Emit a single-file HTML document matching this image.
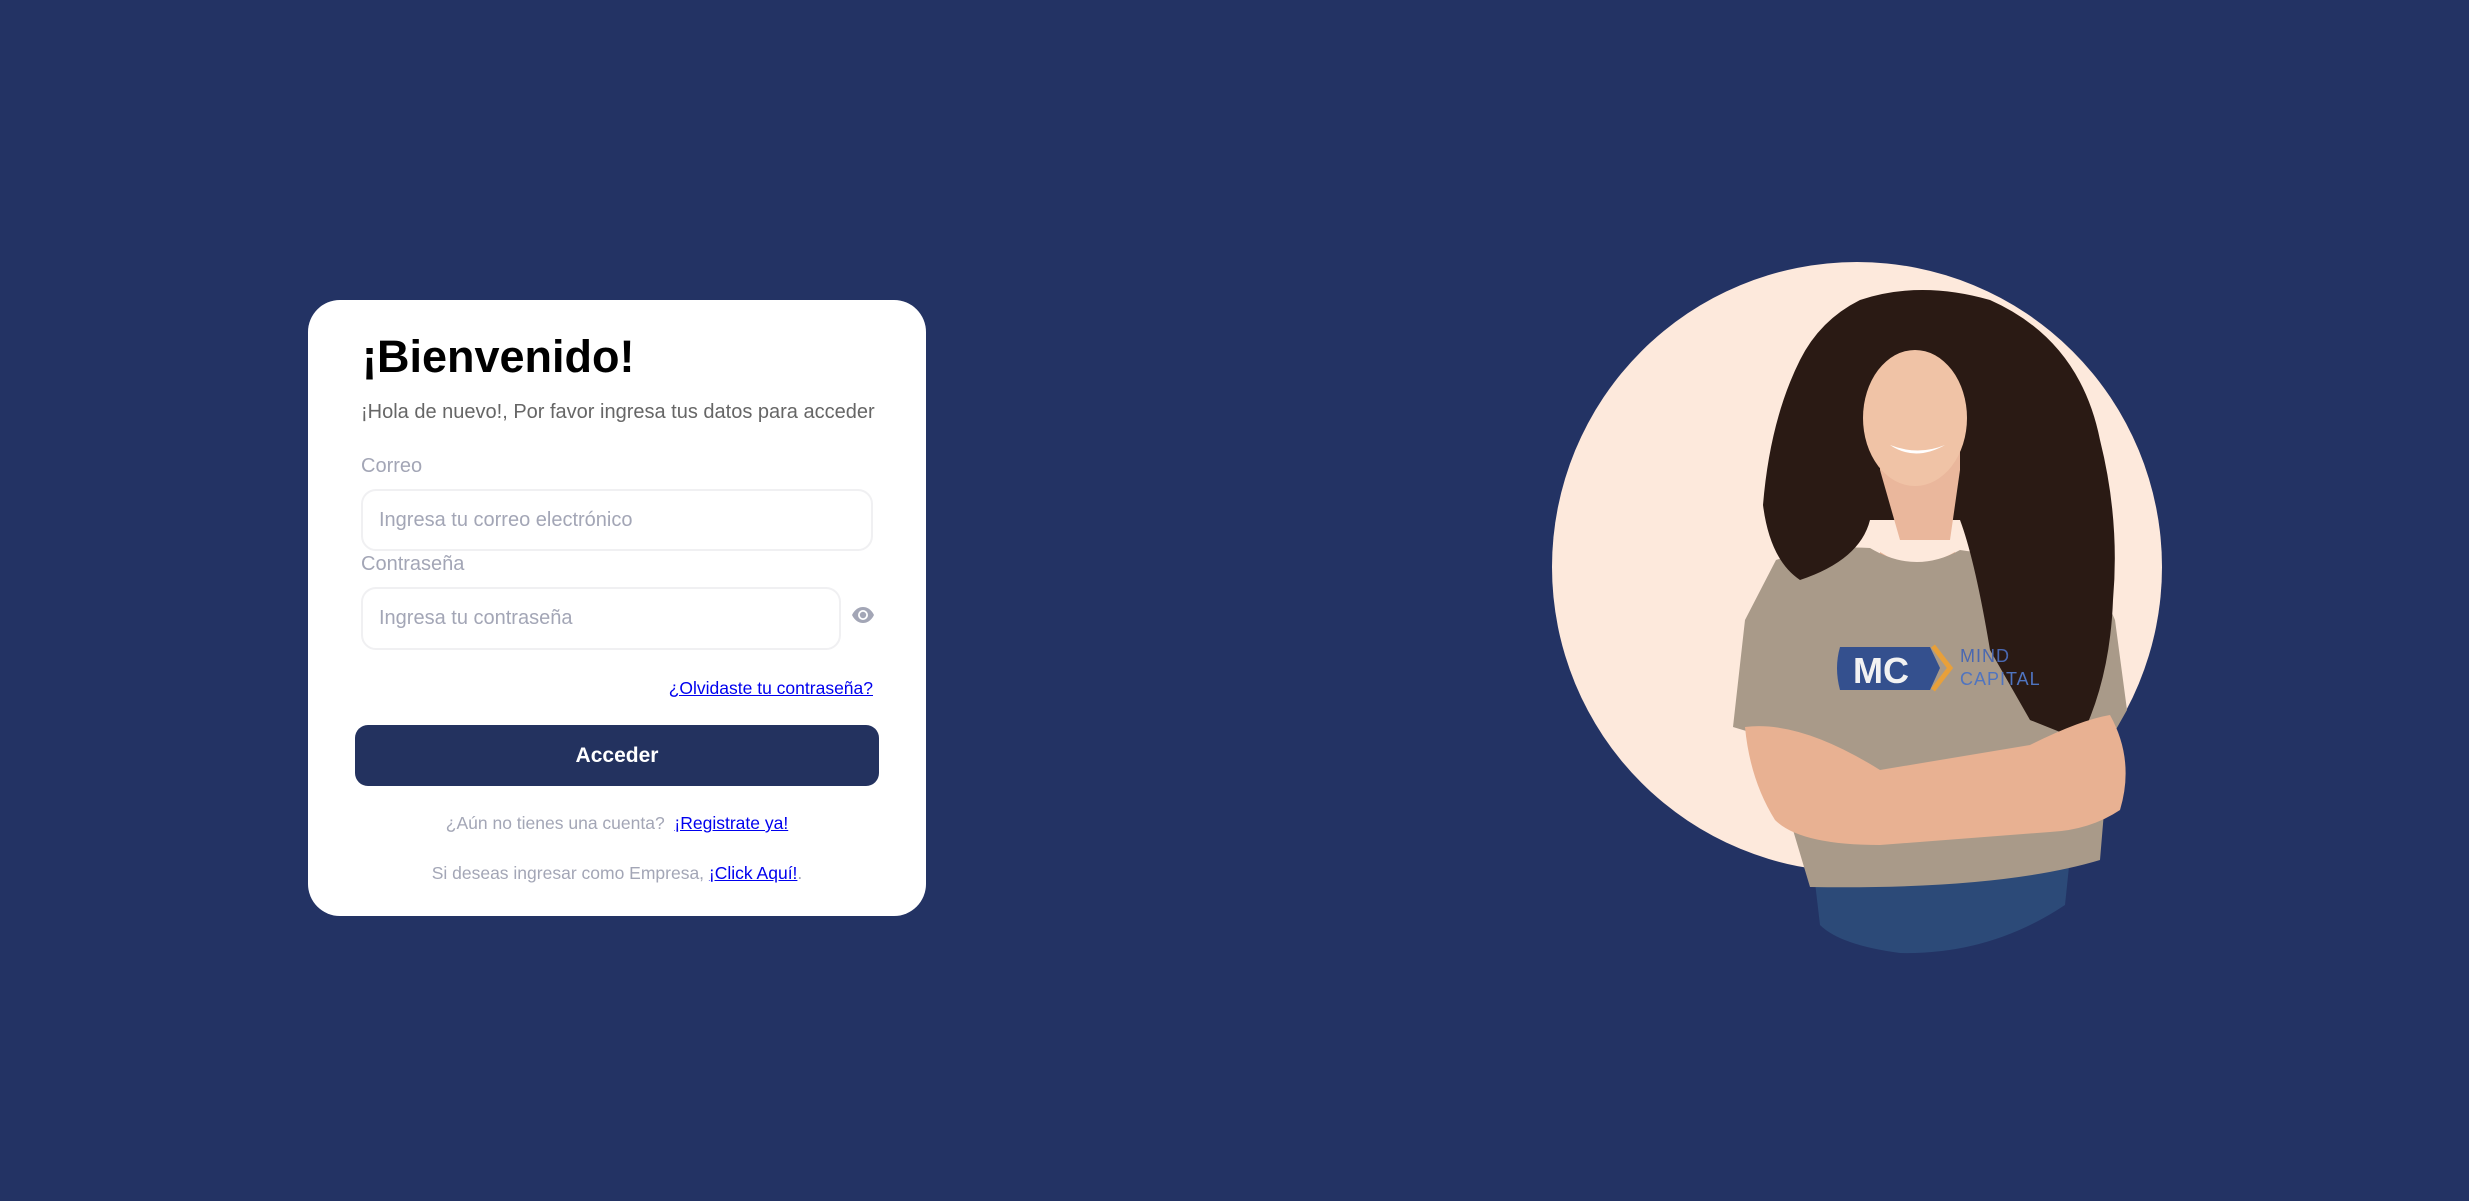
<!DOCTYPE html>
<html><head><meta charset="utf-8"><style>
*{box-sizing:border-box;margin:0;padding:0}
html,body{width:2469px;height:1201px;overflow:hidden;background:#233364;font-family:"Liberation Sans",Arial,sans-serif}
.card{position:absolute;left:308px;top:300px;width:618px;height:616px;background:#fff;border-radius:32px}
.abs{position:absolute;white-space:nowrap}
h1{position:absolute;left:54px;top:31px;font-size:45px;font-weight:bold;color:#000}
.sub{left:53px;top:101px;font-size:20px;color:#666}
.lbl{font-size:20px;color:#a3a6b6}
.inp{position:absolute;border:2px solid #f0f0f2;border-radius:15px;background:#fff;font-size:20px;color:#a3a6b6;padding-left:16px;display:flex;align-items:center}
a{color:#0000ee;text-decoration:underline}
.btn{position:absolute;left:47px;top:425px;width:524px;height:61px;background:#23325f;border-radius:13px;color:#fff;font-weight:bold;font-size:21px;display:flex;align-items:center;justify-content:center}
.small{font-size:17.5px;color:#a3a6b6;width:618px;text-align:center;left:0}
</style></head><body>
<div class="card">
<h1>¡Bienvenido!</h1>
<div class="abs sub">¡Hola de nuevo!, Por favor ingresa tus datos para acceder</div>
<div class="abs lbl" style="left:53px;top:155px">Correo</div>
<div class="inp" style="left:53px;top:189px;width:512px;height:62px">Ingresa tu correo electrónico</div>
<div class="abs lbl" style="left:53px;top:253px">Contraseña</div>
<div class="inp" style="left:53px;top:287px;width:480px;height:63px">Ingresa tu contraseña</div>
<svg class="abs" style="left:543px;top:305px" width="24" height="20" viewBox="0 0 24 20"><path d="M1 10C4 4 8 2 12 2s8 2 11 8c-3 6-7 8-11 8S4 16 1 10z" fill="#a3a6b6"/><circle cx="12" cy="10" r="5" fill="#fff"/><circle cx="12" cy="10" r="3.2" fill="#a3a6b6"/></svg>
<div class="abs" style="right:53px;top:378px;font-size:17.5px"><a>¿Olvidaste tu contraseña?</a></div>
<div class="btn">Acceder</div>
<div class="abs small" style="top:513px">¿Aún no tienes una cuenta? &nbsp;<a>¡Registrate ya!</a></div>
<div class="abs small" style="top:563px">Si deseas ingresar como Empresa, <a>¡Click Aquí!</a>.</div>
</div>
<svg class="abs" style="left:0;top:0" width="2469" height="1201">
<circle cx="1857" cy="567" r="305" fill="#fde9dc"/>
<path d="M1812 857 L2070 857 L2065 905 Q1990 955 1900 953 Q1840 945 1820 925 Z" fill="#2c4a78"/>
<path d="M1880 552 Q1915 575 1955 552 L1955 600 L1880 600Z" fill="#e8b192"/>
<path d="M1776 560 Q1820 545 1870 548 Q1915 575 1960 550 L2030 560 Q2100 580 2115 620 L2127 710 L2110 740 L2100 860 Q2000 890 1810 887 L1790 820 L1776 740 L1733 727 L1745 620 Z" fill="#a99a89"/>
<path d="M1860 300 Q1920 280 1990 300 Q2080 340 2100 440 Q2120 520 2113 600 Q2110 680 2080 740 L2030 720 L1990 650 Q1975 560 1960 520 L1870 520 Q1860 560 1800 580 Q1770 560 1763 505 Q1770 420 1800 360 Q1820 320 1860 300Z" fill="#2a1a14"/>
<path d="M1880 395 L1880 470 L1900 540 L1950 540 L1960 470 L1960 395Z" fill="#eab79c"/>
<ellipse cx="1915" cy="418" rx="52" ry="68" fill="#f0c3a6"/>
<path d="M1890 445 Q1915 462 1945 445 Q1918 456 1890 445Z" fill="#fff"/>
<path d="M1745 727 Q1800 720 1880 770 L2030 745 Q2080 720 2110 715 Q2135 760 2120 810 Q2090 830 2050 832 L1880 845 Q1800 845 1775 820 Q1750 780 1745 727Z" fill="#e8b192"/>
<path d="M1840 647 L1930 647 L1940 668 L1930 690 L1840 690 Q1834 668 1840 647Z" fill="#34508e"/>
<path d="M1933 646 L1950 668 L1933 690" stroke="#e8a03a" stroke-width="5" fill="none"/>
<text x="1853" y="683" font-family="Liberation Sans" font-weight="bold" font-size="36" fill="#f2f2f2">MC</text>
<text x="1960" y="662" font-family="Liberation Sans" font-size="18" letter-spacing="1" fill="#4a68b0">MIND</text>
<text x="1960" y="685" font-family="Liberation Sans" font-size="18" letter-spacing="1" fill="#4f74c0">CAPITAL</text>
</svg>
</body></html>
